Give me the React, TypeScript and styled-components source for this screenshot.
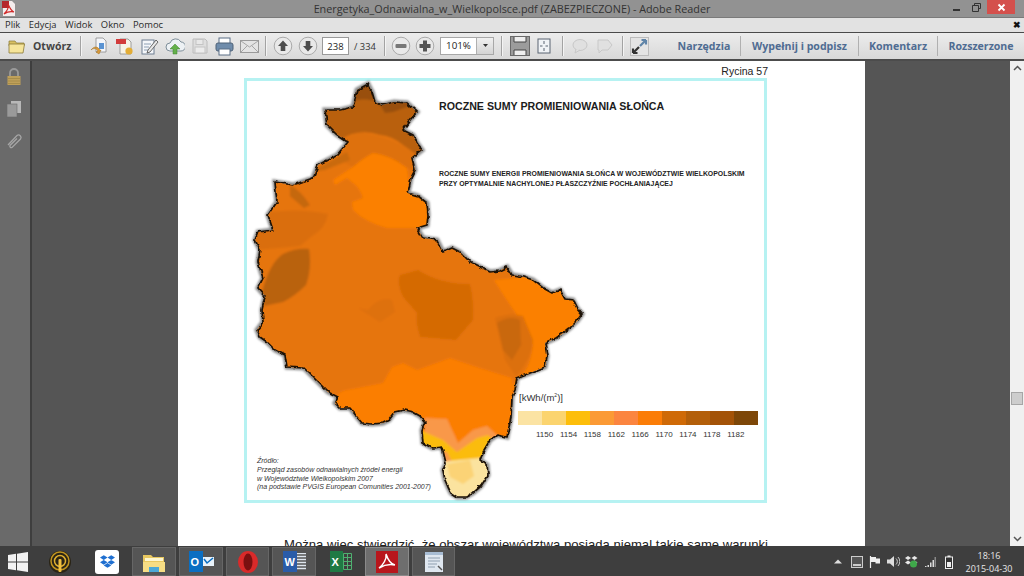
import React from "react";
import styled, { createGlobalStyle } from "styled-components";
import { FaDropbox } from "react-icons/fa";

const Global = createGlobalStyle`
  html, body { margin: 0; padding: 0; width: 1024px; height: 576px; overflow: hidden; background: #555; }
  #root { width: 1024px; height: 576px; }
  * { box-sizing: border-box; }
`;

const Shell = styled.div`
  width: 1024px; height: 576px; display: flex; flex-direction: column; overflow: hidden;
  font-family: "Open Sans", "Liberation Sans", sans-serif;
`;
const TitleBar = styled.div`
  height: 17px; flex: none; background: #929292; display: flex; align-items: center; position: relative;
`;
const AppLogo = styled.svg`
  width: 13px; height: 15px; margin-left: 2px; flex: none;
`;
const TitleText = styled.div`
  position: absolute; left: 0; right: 0; text-align: center; font-size: 10.8px; color: #333; line-height: 17px; white-space: nowrap;
`;
const WinControls = styled.div`
  margin-left: auto; margin-right: 9px; display: flex; align-items: flex-start; height: 15px; position: relative; z-index: 1; align-self: flex-start;
`;
const WinBtn = styled.div<{ $w: number; $danger?: boolean }>`
  width: ${p => p.$w}px; height: 14px; display: flex; align-items: center; justify-content: center;
  background: ${p => (p.$danger ? "#d4504c" : "transparent")};
`;
const MenuBar = styled.div`
  height: 15px; flex: none; background: #e2e2e2; display: flex; align-items: center; padding-left: 5px; gap: 8.500px; border-top: 1px solid #7a7a7a; position: relative;
`;
const MenuItem = styled.span`
  font-size: 9.400px; color: #2a2a2a; line-height: 14px; font-weight: 500;
`;
const MenuClose = styled.span`
  margin-left: auto; margin-right: 3px; font-size: 9px; font-weight: 700; color: #111; font-family: "Liberation Sans", sans-serif;
`;
const Toolbar = styled.div`
  height: 29px; flex: none; display: flex; align-items: center; padding-left: 8px;
  background: linear-gradient(#ececec, #d9d9d9); border-top: 1px solid #4a4a4a; border-bottom: 2px solid #4c4c4c;
`;
const OpenLabel = styled.span`
  font-size: 10.5px; font-weight: 700; color: #444; margin-left: 7px; width: 33px; white-space: nowrap;
`;
const Sep = styled.div<{ $ml: number; $mr: number }>`
  width: 1px; height: 20px; background: #a3a3a3; box-shadow: 1px 0 0 #f4f4f4; margin-left: ${p => p.$ml}px; margin-right: ${p => p.$mr}px; flex: none;
`;
const Slot = styled.div<{ $w?: number }>`
  width: ${p => p.$w ?? 25}px; height: 24px; flex: none; display: flex; align-items: center; justify-content: center;
`;
const PageInput = styled.div`
  width: 27px; height: 18px; margin-left: 2px; background: #fff; border: 1px solid #9a9a9a; font-size: 9.5px; color: #222; display: flex; align-items: center; justify-content: center; flex: none;
`;
const PageTotal = styled.span`
  margin-left: 5px; width: 23px; font-size: 9.3px; color: #333; white-space: nowrap; flex: none;
`;
const ZoomSelect = styled.div`
  width: 54px; height: 18px; margin-left: 3px; background: #fff; border: 1px solid #a8a8a8; display: flex; flex: none;
`;
const ZoomValue = styled.span`
  flex: 1; font-size: 9.8px; color: #222; text-align: center; line-height: 16px;
`;
const ZoomCaret = styled.span`
  width: 17px; background: linear-gradient(#f0f0f0, #d4d4d4); border-left: 1px solid #b0b0b0; display: flex; align-items: center; justify-content: center;
`;
const Tabs = styled.div`
  margin-left: auto; display: flex; align-items: center; height: 100%;
`;
const Tab = styled.div<{ $last?: boolean; $w: number }>`
  height: 20px; width: ${p => p.$w}px; display: flex; align-items: center; justify-content: center; font-size: 10.6px; font-weight: 700; color: #4f6c92; white-space: nowrap;
  border-right: ${p => (p.$last ? "none" : "1px solid #b0b0b0")};
`;
const Main = styled.div`
  flex: 1; min-height: 0; display: flex; overflow: hidden; background: #555;
`;
const Rail = styled.div`
  width: 32px; flex: none; background: #6a6a6a; border-right: 2px solid #3e3e3e; display: flex; flex-direction: column; align-items: center; padding-top: 5px; gap: 10px; padding-right: 3px;
`;
const RailIcon = styled.div`
  width: 20px; height: 22px; display: flex; align-items: center; justify-content: center;
`;
const Gutter = styled.div<{ $w: number }>`
  width: ${p => p.$w}px; flex: none; background: #555;
`;
const Page = styled.div`
  width: 687px; flex: none; background: #fff; display: flex; flex-direction: column; overflow: hidden; font-family: "Liberation Sans", Arial, sans-serif;
`;
const Caption = styled.div`
  height: 17px; flex: none; padding-right: 97px; text-align: right; font-size: 10.500px; line-height: 20px; color: #222;
`;
const Figure = styled.div`
  width: 523px; height: 425px; margin-left: 66px; flex: none; position: relative; border: 3px solid #b6f2f2; background: #fff;
`;
const MapSvg = styled.svg`
  position: absolute; left: -3px; top: -3px; width: 523px; height: 425px;
`;
const MapTitle = styled.div`
  position: absolute; left: 192px; top: 19px; font-size: 10.650px; font-weight: 700; color: #1c1c1c; white-space: nowrap; line-height: 13px;
`;
const MapSubtitle = styled.div`
  position: absolute; left: 192px; top: 88px; font-size: 6.900px; font-weight: 700; color: #222; white-space: nowrap; line-height: 9.500px;
`;
const Source = styled.div`
  position: absolute; left: 10px; top: 376px; font-size: 7px; font-style: italic; color: #333; white-space: nowrap; line-height: 8.800px;
`;
const Legend = styled.div`
  position: absolute; left: 271px; top: 307px; width: 240px; display: flex; flex-direction: column;
`;
const LegendUnit = styled.div`
  font-size: 9.500px; color: #333; line-height: 13px; height: 23px; padding-top: 3px; padding-left: 1px;
  sup { font-size: 5px; line-height: 0; }
`;
const LegendBar = styled.div`
  display: flex; height: 14px;
`;
const LegendCell = styled.div<{ $c: string }>`
  flex: 1; background: ${p => p.$c};
`;
const LegendLabels = styled.div`
  display: flex; gap: 6.700px; margin: 5px 0 0 18px; font-size: 8px; color: #333; line-height: 10px;
`;
const BodyText = styled.div`
  margin: 33px 0 0 106px; width: 484px; font-size: 13.100px; line-height: 17px; color: #222; text-align: justify; text-align-last: justify; white-space: nowrap; flex: none;
`;
const Scrollbar = styled.div`
  width: 14px; flex: none; background: #f0f0f0; display: flex; flex-direction: column; align-items: center; justify-content: space-between; position: relative; padding: 4px 0;
`;
const Thumb = styled.div`
  position: absolute; left: 1px; right: 1px; top: 331px; height: 13px; background: #cdcdcd; border: 1px solid #a6a6a6;
`;
const TaskBar = styled.div`
  height: 30px; flex: none; background: #3e3e3e; display: flex; align-items: stretch; position: relative; padding-top: 1px;
`;
const StartSlot = styled.div`
  width: 36px; margin-right: 5px; display: flex; align-items: center; justify-content: center;
`;
const TaskItem = styled.div<{ $w: number; $ml?: number; $boxed?: boolean; $lit?: boolean }>`
  width: ${p => p.$w}px; margin-left: ${p => p.$ml ?? 0}px; flex: none; display: flex; align-items: center; justify-content: center;
  background: ${p => (p.$lit ? "#6e6e6e" : p.$boxed ? "#555" : "transparent")};
  border: ${p => (p.$boxed || p.$lit ? `1px solid ${p.$lit ? "#8a8a8a" : "#666"}` : "none")};
`;
const DropTile = styled.div`
  width: 24px; height: 24px; border-radius: 3px; background: #fff; color: #1f6fd0; display: flex; align-items: center; justify-content: center; font-size: 15px;
`;
const AppTile = styled.div<{ $c: string; $w: number }>`
  width: ${p => p.$w}px; height: 21px; background: ${p => p.$c}; color: #fff; font: 700 11px "Liberation Sans", sans-serif; display: flex; align-items: center; justify-content: flex-start; padding-left: 2px;
`;
const AppRow = styled.div`
  display: flex; align-items: center;
`;
const Tray = styled.div`
  margin-left: auto; display: flex; align-items: center; height: 100%;
`;
const TraySlot = styled.div<{ $w: number }>`
  width: ${p => p.$w}px; display: flex; align-items: center; justify-content: center; flex: none;
`;
const Clock = styled.div`
  width: 58px; margin-right: 6px; text-align: center; color: #e8e8e8; font-size: 9px; line-height: 13px; flex: none; white-space: nowrap;
`;

const Ic: React.FC<{ s?: number; h?: number; children: React.ReactNode }> = ({ s = 20, h, children }) => (
  <svg width={s} height={h ?? s} viewBox={`0 0 ${s} ${h ?? s}`}>{children}</svg>
);

const Round: React.FC<{ kind: "up" | "down" | "minus" | "plus" }> = ({ kind }) => (
  <Ic s={20}>
    <circle cx="10" cy="10" r="8.800" fill="#e9e9e9" stroke="#aaa" />
    {kind === "up" && <path d="M10 4.500 L15 10 H12.300 V15 H7.700 V10 H5 Z" fill="#4d4d4d" />}
    {kind === "down" && <path d="M10 15.500 L15 10 H12.300 V5 H7.700 V10 H5 Z" fill="#4d4d4d" />}
    {kind === "minus" && <rect x="4.500" y="8" width="11" height="4" rx="1" fill="#777" />}
    {kind === "plus" && <path d="M8 4.500h4V8h3.500v4H12v3.500H8V12H4.500V8H8z" fill="#555" />}
  </Ic>
);

const OUTLINE = "M368 84 L372 92 L375 102 L382 105 L394 102 L407 103 L417 112 L410 120 L403 130 L413 135 L417 143 L422 150 L412 158 L415 170 L411 178 L408 193 L418 196 L427 203 L428 215 L427 225 L417 228 L423 238 L437 240 L443 252 L452 248 L460 252 L470 262 L482 268 L490 272 L499 271 L507 267 L512 275 L524 277 L533 280 L543 288 L552 293 L560 290 L565 299 L573 300 L577 308 L582 314 L578 320 L570 328 L565 332 L556 338 L545 343 L547 356 L545 367 L530 373 L517 378 L515 390 L512 397 L511 417 L507 437 L497 435 L490 440 L484 450 L480 460 L487 465 L488 475 L481 486 L473 493 L466 497 L457 497 L451 493 L448 487 L445 480 L443 470 L446 463 L442 447 L432 448 L423 443 L422 430 L425 422 L420 416 L413 412 L404 410 L395 412 L389 420 L383 423 L372 424 L362 423 L356 416 L350 408 L340 408 L335 403 L338 397 L328 392 L318 382 L304 368 L287 367 L285 355 L275 350 L267 342 L260 337 L257 330 L263 322 L262 310 L265 296 L258 288 L263 278 L258 262 L260 250 L255 240 L258 232 L273 230 L268 215 L277 202 L275 182 L293 185 L313 178 L318 165 L337 155 L348 142 L336 134 L327 125 L325 110 L340 110 L353 107 L357 90 Z";

const MapArt: React.FC = () => (
  <MapSvg viewBox="244 78 523 425">
    <defs>
      <clipPath id="mapClip"><path d={OUTLINE} /></clipPath>
      <filter id="rough" x="-5%" y="-5%" width="110%" height="110%" colorInterpolationFilters="sRGB">
        <feTurbulence type="fractalNoise" baseFrequency="0.16" numOctaves="2" seed="4" result="n" />
        <feDisplacementMap in="SourceGraphic" in2="n" scale="4.500" xChannelSelector="R" yChannelSelector="G" />
      </filter>
      <filter id="soft" x="-5%" y="-5%" width="110%" height="110%"><feGaussianBlur stdDeviation="0.900" /></filter>
      <filter id="halo" x="-5%" y="-5%" width="110%" height="110%"><feGaussianBlur stdDeviation="1.300" /></filter>
    </defs>
    <path d={OUTLINE} fill="none" stroke="#8a8a8a" strokeWidth="5" filter="url(#halo)" />
    <g clipPath="url(#mapClip)">
      <g filter="url(#soft)">
        <rect x="244" y="78" width="350" height="425" fill="#e6750c" />
        <path d="M320 70 H430 V160 L420 157 Q410 150 403 145 Q392 136 380 135 Q368 131 357 133 Q345 135 340 142 L320 145 Z" fill="#b9610a" />
        <path d="M345 70 H430 V112 L420 112 Q412 107 407 107 L393 112 L385 113 Q378 100 370 100 Q360 98 352 102 Z" fill="#99500a" />
        <path d="M340 142 Q350 134 362 133 Q385 136 403 146 L420 157 L415 170 L407 168 Q390 155 373 153 L353 167 L340 160 Z" fill="#de7108" />
        <path d="M333 180 Q345 172 353 167 Q363 158 373 153 Q390 155 407 168 L410 193 L427 203 L427 228 L387 228 Q365 222 353 210 L352 202 L363 198 Q360 188 353 183 L347 178 L335 185 Z" fill="#fb8002" />
        <path d="M310 172 L347 152 L350 160 L325 170 Z" fill="#c96a08" />
        <path d="M290 185 Q300 190 310 205 L304 208 L290 196 Z" fill="#c56708" />
        <path d="M270 212 Q300 208 328 214 Q326 228 312 236 L300 246 Q280 248 255 250 V238 Z" fill="#da6e07" />
        <path d="M262 292 Q270 262 283 254 Q295 248 309 249 Q312 268 306 285 Q295 296 283 302 L264 306 Z" fill="#b9620a" />
        <path d="M418 270 Q440 284 470 284 Q474 300 473 320 L456 340 L420 337 Q415 320 417 313 L403 297 Q396 282 400 275 Z" fill="#d56b05" />
        <path d="M368 310 Q380 296 392 300 L395 312 L380 322 L358 308 Z" fill="#de7108" />
        <path d="M494 280 L600 270 V400 L510 390 L517 378 Q530 372 533 345 Q528 325 517 315 Q505 298 494 280 Z" fill="#fb8002" />
        <path d="M495 318 Q510 312 523 316 L533 340 Q532 358 516 376 L505 360 Z" fill="#dc7007" />
        <path d="M497 323 Q510 315 520 320 L521 345 L512 360 L503 350 Z" fill="#c96808" />
        <path d="M250 500 V420 L333 400 Q340 390 347 390 L383 383 L392 367 L403 363 L417 370 L450 358 L480 368 L512 378 L520 500 Z" fill="#fb7e04" />
        <path d="M425 418 L447 419 L458 443 L473 430 L487 426 L500 438 L480 465 L450 468 L425 445 Z" fill="#f9984a" />
        <path d="M420 430 L443 440 L457 452 L477 438 L488 435 L495 442 L480 460 L453 464 L447 452 L420 446 Z" fill="#fbbc0a" />
        <path d="M440 462 L480 458 L495 470 V505 H440 Z" fill="#fbe39f" />
        <path d="M447 464 L470 460 L474 476 L463 484 L450 477 Z" fill="#fbd376" />
      </g>
    </g>
    <g filter="url(#rough)">
      <path d={OUTLINE} fill="none" stroke="#1d1207" strokeWidth="1.700" strokeLinejoin="round" />
    </g>
  </MapSvg>
);

const LEGEND = ["#fbe3a3", "#fbd46f", "#fdbe0a", "#fb9a35", "#fb8540", "#fb7d07", "#cf6a07", "#b35f0a", "#a35308", "#7d4708"];
const VALUES = ["1150", "1154", "1158", "1162", "1166", "1170", "1174", "1178", "1182"];

export default function App() {
  return (
    <Shell>
      <Global />
      <TitleBar>
        <AppLogo viewBox="0 0 13 15">
          <path d="M1 0h9l3 3v12H1z" fill="#f4ecec" />
          <rect x="0" y="0" width="7" height="7" fill="#b3262b" />
          <path d="M2 13 C5 10 7 6 6 3 C8 7 9 10 12 11 C8 10 5 11 2 13z" fill="none" stroke="#d02828" strokeWidth="1.200" />
        </AppLogo>
        <TitleText>Energetyka_Odnawialna_w_Wielkopolsce.pdf (ZABEZPIECZONE) - Adobe Reader</TitleText>
        <WinControls>
          <WinBtn $w={17}><Ic s={9}><rect x="1" y="6" width="7" height="2" fill="#333" /></Ic></WinBtn>
          <WinBtn $w={22}><Ic s={9}><path d="M2.500 2.500V.5h6v5h-2M.5 2.500h6v6h-6z" fill="none" stroke="#333" /></Ic></WinBtn>
          <WinBtn $w={28} $danger><Ic s={9}><path d="M1.500 1.500l6 6M7.500 1.500l-6 6" stroke="#fff" strokeWidth="1.800" /></Ic></WinBtn>
        </WinControls>
      </TitleBar>
      <MenuBar>
        {["Plik", "Edycja", "Widok", "Okno", "Pomoc"].map(m => <MenuItem key={m}>{m}</MenuItem>)}
        <MenuClose>✖</MenuClose>
      </MenuBar>
      <Toolbar>
        <Ic s={18} h={16}>
          <path d="M1 3h6l1.500 2H16v3H1z" fill="#d8c062" stroke="#8a7a38" strokeWidth=".7" />
          <path d="M1 15V6h15.500L15 15z" fill="#f6e59a" stroke="#8a7a38" strokeWidth=".8" />
        </Ic>
        <OpenLabel>Otwórz</OpenLabel>
        <Sep $ml={14} $mr={6} />
        <Slot><Ic s={19}>
          <path d="M6 1h7l3 3v11H6z" fill="#f4f6fa" stroke="#8b8b8b" strokeWidth=".8" />
          <rect x="9" y="6" width="5" height="6" fill="#5a93d2" />
          <path d="M1 13c2-2 5-2 7 1l-2 1 3 2 2-4-1 .5C8 9 4 9 1 13z" fill="#d99a3a" stroke="#9a6a1c" strokeWidth=".5" />
        </Ic></Slot>
        <Slot><Ic s={19}>
          <path d="M5 2h8l3 3v12H5z" fill="#f7f3e7" stroke="#8b8b8b" strokeWidth=".8" />
          <rect x="1" y="2" width="10" height="5" fill="#d23c3c" />
          <circle cx="14" cy="14" r="3.600" fill="#e3ad36" />
        </Ic></Slot>
        <Slot><Ic s={19}>
          <rect x="2" y="3" width="12" height="14" fill="#f5f7fa" stroke="#6f7f92" />
          <path d="M4 7h7M4 10h5M4 13h4" stroke="#8ea0b4" />
          <path d="M8 13 L16 3 l2 2 L10 15 l-3 1z" fill="#e8e8e8" stroke="#4a4a4a" strokeWidth=".8" />
        </Ic></Slot>
        <Slot><Ic s={20}>
          <path d="M5 15a4 4 0 0 1 0-8 6 6 0 0 1 11-1 4.500 4.500 0 0 1 0 9z" fill="#edf1f4" stroke="#7f8f9a" />
          <path d="M10 8l5 5h-3v5H8v-5H5z" fill="#64b04a" stroke="#3f8030" strokeWidth=".5" />
        </Ic></Slot>
        <Slot><Ic s={18}>
          <path d="M2 2h12l2 2v12H2z" fill="#dedede" stroke="#bcbcbc" />
          <rect x="5" y="2.500" width="7" height="5" fill="#e8e8e8" stroke="#c4c4c4" />
          <rect x="4" y="10" width="10" height="6" fill="#ececec" stroke="#c4c4c4" />
        </Ic></Slot>
        <Slot><Ic s={19}>
          <rect x="4" y="1" width="11" height="6" fill="#fff" stroke="#5a6e86" />
          <rect x="1" y="6" width="17" height="8" rx="2" fill="#6f8cab" stroke="#4f6278" />
          <rect x="4" y="12" width="11" height="6" fill="#fff" stroke="#5a6e86" />
        </Ic></Slot>
        <Slot><Ic s={20} h={15}>
          <rect x=".5" y="1.500" width="18" height="12" fill="#e4e4e4" stroke="#9a9a9a" />
          <path d="M1 2l8.500 6L18 2M1 13l6-6M18 13l-6-6" fill="none" stroke="#a6a6a6" />
        </Ic></Slot>
        <Sep $ml={3} $mr={4} />
        <Slot><Round kind="up" /></Slot>
        <Slot><Round kind="down" /></Slot>
        <PageInput>238</PageInput>
        <PageTotal>/ 334</PageTotal>
        <Sep $ml={7} $mr={4} />
        <Slot $w={24}><Round kind="minus" /></Slot>
        <Slot $w={24}><Round kind="plus" /></Slot>
        <ZoomSelect>
          <ZoomValue>101%</ZoomValue>
          <ZoomCaret><Ic s={7} h={4}><path d="M1 0h5L3.500 3z" fill="#333" /></Ic></ZoomCaret>
        </ZoomSelect>
        <Sep $ml={7} $mr={6} />
        <Slot $w={24}><Ic s={20}>
          <rect x=".5" y=".5" width="19" height="19" fill="#9c9c9c" stroke="#6a6a6a" />
          <path d="M4 1v5h12V1M4 19v-5h12v5" fill="#eee" stroke="#444" />
        </Ic></Slot>
        <Slot $w={24}><Ic s={16}>
          <rect x="2" y="1" width="12" height="14" fill="#f0f3f6" stroke="#5a6572" />
          <path d="M8 3v3M8 10v3M4 8h2.500M9.500 8H12" stroke="#5a6572" />
        </Ic></Slot>
        <Sep $ml={6} $mr={4} />
        <Slot><Ic s={18}><ellipse cx="9" cy="8" rx="7" ry="5.500" fill="#e0e0e0" stroke="#c8c8c8" /><path d="M5 12l-1 4 5-3" fill="#e0e0e0" stroke="#c8c8c8" /></Ic></Slot>
        <Slot><Ic s={18}><path d="M2 3h10l4 5-4 5H6l-3 3v-3H2z" fill="#e0e0e0" stroke="#c8c8c8" /></Ic></Slot>
        <Sep $ml={5} $mr={4} />
        <Slot $w={24}><Ic s={19}>
          <rect x=".5" y=".5" width="18" height="18" fill="#e4e4e4" stroke="#bcbcbc" />
          <path d="M10 9l6-6m0 0h-4.500M16 3v4.500" stroke="#5f84a8" strokeWidth="2.200" fill="none" />
          <path d="M9 10l-6 6m0 0h4.500M3 16v-4.500" stroke="#333" strokeWidth="2.200" fill="none" />
        </Ic></Slot>
        <Tabs>
          <Tab $w={73}>Narzędzia</Tab>
          <Tab $w={118}>Wypełnij i podpisz</Tab>
          <Tab $w={79}>Komentarz</Tab>
          <Tab $w={86} $last>Rozszerzone</Tab>
        </Tabs>
      </Toolbar>
      <Main>
        <Rail>
          <RailIcon><Ic s={16} h={20}>
            <path d="M4 9V6a4 4 0 0 1 8 0v3" fill="none" stroke="#9a9a9a" strokeWidth="1.800" />
            <rect x="1.500" y="9" width="13" height="9" fill="#bfa05a" />
            <path d="M2 11.500h12M2 14h12M2 16.500h12" stroke="#97803f" strokeWidth=".6" />
          </Ic></RailIcon>
          <RailIcon><Ic s={16} h={18}>
            <rect x="5" y="1" width="10" height="12" fill="#b8b8b8" />
            <rect x="1" y="4" width="10" height="13" fill="#9a9a9a" stroke="#6a6a6a" strokeWidth=".6" />
          </Ic></RailIcon>
          <RailIcon><Ic s={18}>
            <path d="M3 13 L12 3.500a2.500 2.500 0 0 1 3.500 3.500L7 15.500a1.500 1.500 0 0 1-2-2L12 6.500" fill="none" stroke="#a5a5a5" strokeWidth="1.300" />
          </Ic></RailIcon>
        </Rail>
        <Gutter $w={146} />
        <Page>
          <Caption>Rycina 57</Caption>
          <Figure>
            <MapArt />
            <MapTitle>ROCZNE SUMY PROMIENIOWANIA SŁOŃCA</MapTitle>
            <MapSubtitle>
              ROCZNE SUMY ENERGII PROMIENIOWANIA SŁOŃCA W WOJEWÓDZTWIE WIELKOPOLSKIM<br />
              PRZY OPTYMALNIE NACHYLONEJ PŁASZCZYŹNIE POCHŁANIAJĄCEJ
            </MapSubtitle>
            <Source>
              Źródło:<br />
              Przegląd zasobów odnawialnych źródeł energii<br />
              w Województwie Wielkopolskim 2007<br />
              (na podstawie PVGIS European Comunities 2001-2007)
            </Source>
            <Legend>
              <LegendUnit>[kWh/(m<sup>2</sup>)]</LegendUnit>
              <LegendBar>{LEGEND.map(c => <LegendCell key={c} $c={c} />)}</LegendBar>
              <LegendLabels>{VALUES.map(v => <span key={v}>{v}</span>)}</LegendLabels>
            </Legend>
          </Figure>
          <BodyText>Można więc stwierdzić, że obszar województwa posiada niemal takie same warunki</BodyText>
        </Page>
        <Gutter $w={145} />
        <Scrollbar>
          <Ic s={9} h={6}><path d="M1 5l3.500-3.500L8 5" fill="none" stroke="#555" strokeWidth="1.500" /></Ic>
          <Thumb />
          <Ic s={9} h={6}><path d="M1 1l3.500 3.500L8 1" fill="none" stroke="#555" strokeWidth="1.500" /></Ic>
        </Scrollbar>
      </Main>
      <TaskBar>
        <StartSlot><Ic s={20}><path d="M0 3l8-1.200V9.500H0zM9 1.700L20 0v9.500H9zM0 10.500h8v7.700L0 17zM9 10.500h11V20L9 18.300z" fill="#f2f2f2" /></Ic></StartSlot>
        <TaskItem $w={38}><Ic s={24}>
          <circle cx="12" cy="12" r="11" fill="#2a2416" />
          <circle cx="12" cy="11" r="9" fill="none" stroke="#c09420" strokeWidth="1.500" />
          <circle cx="12" cy="11" r="5.500" fill="none" stroke="#e0b030" strokeWidth="1.500" />
          <rect x="10.500" y="9" width="3" height="13" rx="1" fill="#f0c040" />
        </Ic></TaskItem>
        <TaskItem $w={50} $ml={3}><DropTile><FaDropbox /></DropTile></TaskItem>
        <TaskItem $w={44} $boxed $ml={0}><Ic s={24} h={24}>
          <path d="M1 5h8l2 2h11v15H1z" fill="#e8c860" />
          <rect x="3" y="8" width="18" height="3" fill="#fdf6d0" />
          <path d="M1 12h22v10H1z" fill="#f6dd84" />
          <rect x="7" y="17" width="10" height="5" fill="#4aa8d8" />
        </Ic></TaskItem>
        <TaskItem $w={44} $boxed $ml={3}>
          <AppRow>
            <AppTile $c="#0a6ec2" $w={14}>O</AppTile>
            <Ic s={11} h={9}><rect width="11" height="9" fill="#e8f2fa" /><path d="M1 2l3 4 6-5" fill="none" stroke="#0a6ec2" strokeWidth="1.500" /></Ic>
          </AppRow>
        </TaskItem>
        <TaskItem $w={43} $boxed $ml={3}><Ic s={24}>
          <ellipse cx="12" cy="12" rx="10" ry="11" fill="#d92a2a" />
          <ellipse cx="12" cy="12" rx="4.500" ry="8.500" fill="#7a1010" />
        </Ic></TaskItem>
        <TaskItem $w={44} $boxed $ml={3}>
          <AppRow>
            <AppTile $c="#2a5ca8" $w={14}>W</AppTile>
            <Ic s={9} h={17}><path d="M0 .5h9M0 3.500h9M0 6.500h9M0 9.500h9M0 12.500h9M0 15.500h9" stroke="#dfe6ee" strokeWidth="1.400" /></Ic>
          </AppRow>
        </TaskItem>
        <TaskItem $w={49}>
          <AppRow>
            <AppTile $c="#1f7a44" $w={13}>X</AppTile>
            <Ic s={9} h={17}><path d="M.5 .5h8v16h-8zM.5 4.500h8M.5 8.500h8M.5 12.500h8M4.500 .5v16" fill="none" stroke="#4fb070" /></Ic>
          </AppRow>
        </TaskItem>
        <TaskItem $w={44} $lit><Ic s={22}>
          <rect width="22" height="22" fill="#b8161c" />
          <path d="M3 17 C7 14 11 8 10 3 C12 9 14 13 19 14 C14 13 8 14 3 17z" fill="none" stroke="#fff" strokeWidth="1.500" />
        </Ic></TaskItem>
        <TaskItem $w={43} $boxed $ml={3}><Ic s={22}>
          <rect x="2" y="1" width="18" height="20" fill="#dfe7f0" />
          <rect x="2" y="1" width="18" height="3" fill="#a8bdd4" />
          <path d="M5 7h12M5 10h12M5 13h9M5 16h7" stroke="#8f9fb0" strokeWidth="1.200" />
          <path d="M15 15l4 4" stroke="#555" strokeWidth="1.500" />
        </Ic></TaskItem>
        <Tray>
          <TraySlot $w={18}><Ic s={8} h={5}><path d="M0 4.500L4 .5l4 4z" fill="#ddd" /></Ic></TraySlot>
          <TraySlot $w={19}><Ic s={12}><rect x=".5" y=".5" width="11" height="11" fill="#555" stroke="#ccc" /><rect x="2" y="8" width="8" height="2" fill="#ccc" /></Ic></TraySlot>
          <TraySlot $w={18}><Ic s={12}><path d="M1.500 0v12" stroke="#eee" strokeWidth="1.200" /><path d="M2 1h5v1.500h4v5H6.500V6H2z" fill="#eee" /></Ic></TraySlot>
          <TraySlot $w={18}><Ic s={13}><path d="M0 4.500h3L7 1v11L3 8.500H0z" fill="#ddd" /><path d="M9 3.500a4 4 0 0 1 0 6M11 2a6.500 6.500 0 0 1 0 9" fill="none" stroke="#ccc" /></Ic></TraySlot>
          <TraySlot $w={19}><Ic s={13}><path d="M3 1l3 2-3 2-3-2zM9.500 1l3 2-3 2-3-2zM3 5.500l3 2-3 2-3-2zM9.500 5.500l3 2-3 2-3-2z" fill="#e8e8e8" /><circle cx="8.500" cy="9" r="3.500" fill="#3fa84a" /></Ic></TraySlot>
          <TraySlot $w={17}><Ic s={12}><path d="M1 10h1.500v1H1zM3.500 9H5v2H3.500zM6 6.500h1.500V11H6zM8.500 4H10v7H8.500z" fill="#ddd" /><path d="M10.500 1H12v10h-1.500z" fill="#888" /></Ic></TraySlot>
          <TraySlot $w={22}><Ic s={8} h={14}><rect x="2.500" y=".5" width="3" height="2" fill="#eee" /><rect x=".5" y="2" width="7" height="11.500" fill="#333" stroke="#eee" /><rect x="2" y="7" width="4" height="5" fill="#eee" /></Ic></TraySlot>
          <Clock>18:16<br />2015-04-30</Clock>
        </Tray>
      </TaskBar>
    </Shell>
  );
}
